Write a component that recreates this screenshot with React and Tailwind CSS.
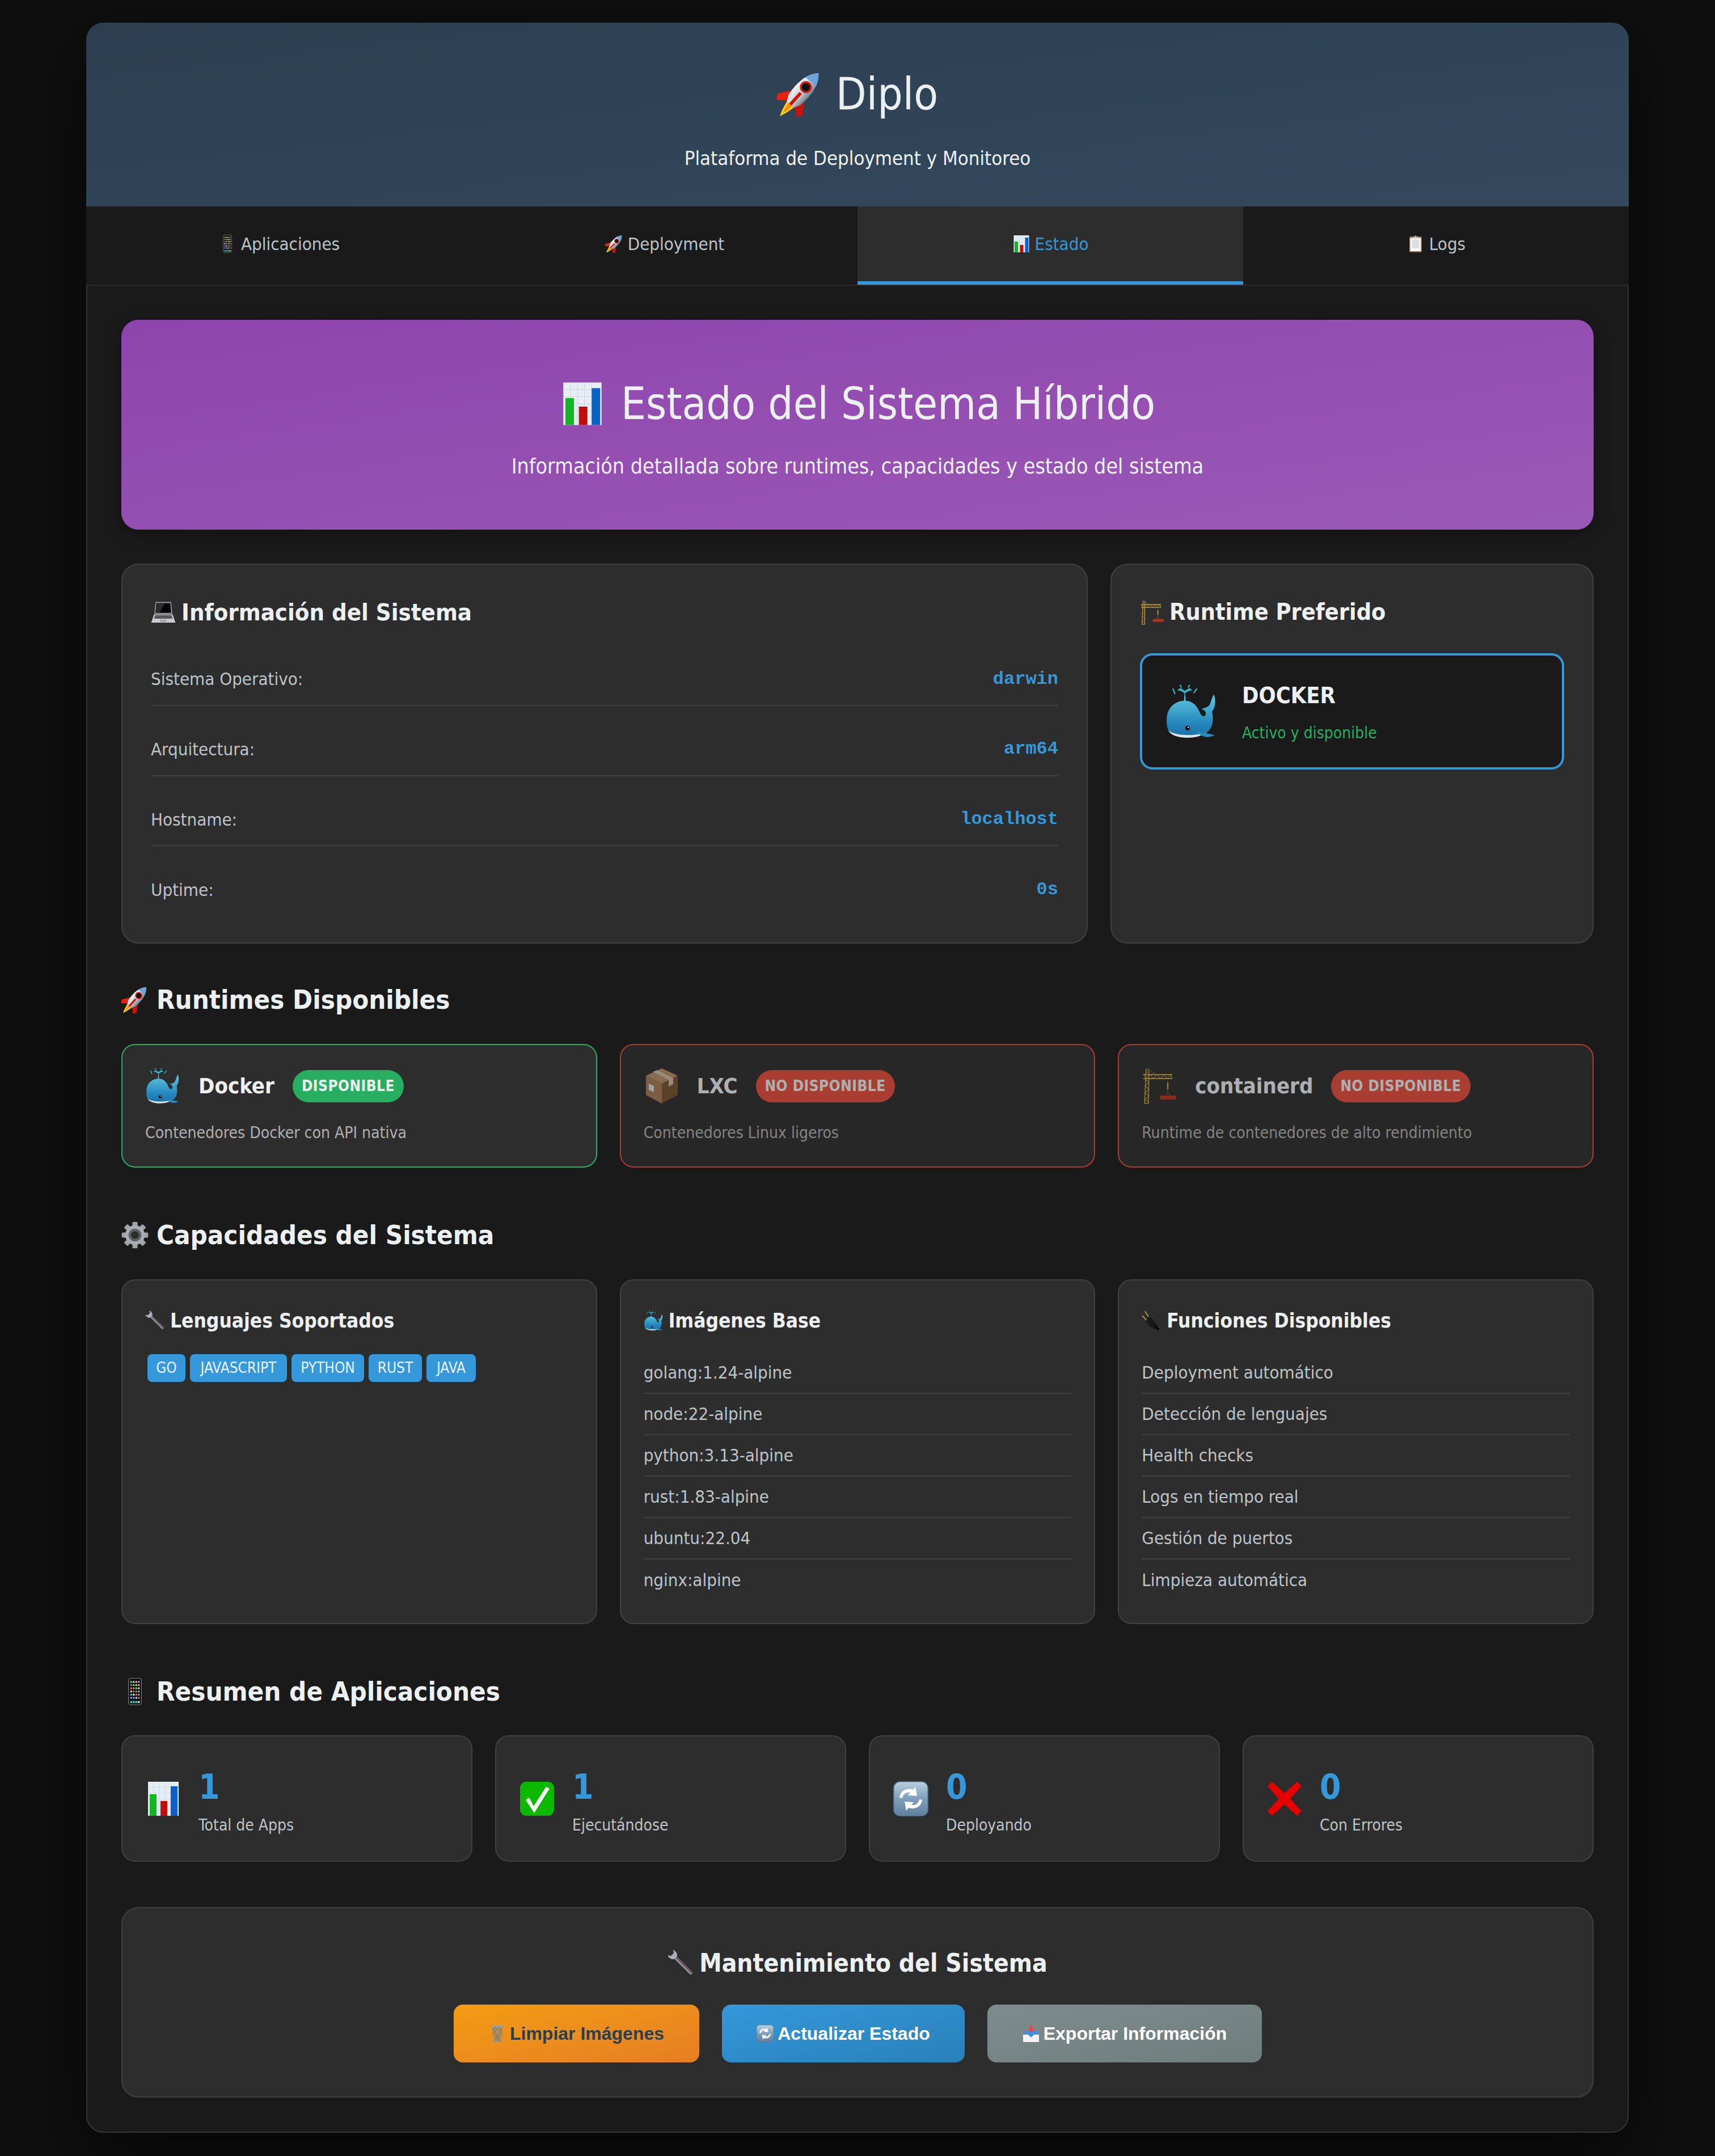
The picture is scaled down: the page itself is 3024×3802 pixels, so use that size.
import { useId } from "react";

const Svg = ({ size, className = "", viewBox = "0 0 64 64", children }) => (
  <svg viewBox={viewBox} width={size} height={size} className={`inline-block shrink-0 ${className}`}>
    {children}
  </svg>
);

const Rocket = ({ size, className }) => {
  const id = useId();
  return (
    <Svg size={size} className={className} viewBox="3 3 58 58">
      <defs>
        <linearGradient id={id} x1="0" x2="1" y1="0" y2="0">
          <stop offset="0" stopColor="#f4f4f4" />
          <stop offset="0.55" stopColor="#c9ced3" />
          <stop offset="1" stopColor="#6f7f8f" />
        </linearGradient>
      </defs>
      <g transform="rotate(42 32 32)">
        <path d="M22 34 L11 50 L14 58 L25 49 Z" fill="#e8200c" />
        <path d="M42 34 L53 50 L50 58 L39 49 Z" fill="#c8140a" />
        <path d="M26 50 H38 L35 62 L32 70 L29 62 Z" fill="#ffd21f" />
        <path d="M29 50 H35 L33.5 60 L32 64 L30.5 60 Z" fill="#ff8a10" />
        <path d="M32 -4 C42 6 45 22 42 42 L38 50 H26 L22 42 C19 22 22 6 32 -4 Z" fill={`url(#${id})`} />
        <path d="M32 -4 C36 0 39 5 41 11 H23 C25 5 28 0 32 -4 Z" fill="#6aa6dc" />
        <circle cx="32" cy="20" r="6.5" fill="#101216" stroke="#d3201a" strokeWidth="2.5" />
        <rect x="30" y="30" width="4" height="20" fill="#c8140a" />
      </g>
    </Svg>
  );
};

const Phone = ({ size, className }) => {
  const colors = ["#5ee08a", "#e9e9e9", "#f2a6d8", "#9a9a9a", "#4cc4f2", "#ffd94a", "#f06a5a", "#7fb0ff"];
  return (
    <Svg size={size} className={className}>
      <rect x="17" y="1" width="30" height="62" rx="5" fill="#0b0b0b" stroke="#8b8b8b" strokeWidth="1.5" />
      {[0, 1, 2, 3, 4, 5].map((r) =>
        [0, 1, 2, 3].map((c) => (
          <rect key={`${r}${c}`} x={21 + c * 6} y={7 + r * 7.5} width="4" height="4.5" rx="1" fill={colors[(r * 3 + c * 5) % 8]} />
        ))
      )}
      <rect x="20" y="53" width="24" height="7" rx="1.5" fill="#3a3a3a" />
      {[0, 1, 2, 3].map((c) => (
        <rect key={c} x={21 + c * 6} y="54.5" width="4" height="4" rx="1" fill={["#3ce0a0", "#4cc4f2", "#5ee08a", "#e9e9e9"][c]} />
      ))}
    </Svg>
  );
};

const Chart = ({ size, className }) => (
  <Svg size={size} className={className}>
    <rect x="5" y="2" width="54" height="60" fill="#e6edf3" />
    <path d="M5 12H59M5 22H59M5 32H59M5 42H59M5 52H59M15 2V62M25 2V62M35 2V62M45 2V62" stroke="#c5d3e0" strokeWidth="0.7" />
    <rect x="8" y="24" width="12" height="38" fill="#12b522" />
    <rect x="27" y="36" width="12" height="26" fill="#c00d0d" />
    <rect x="45" y="10" width="12" height="52" fill="#0a62c8" />
  </Svg>
);

const Clipboard = ({ size, className }) => (
  <Svg size={size} className={className}>
    <rect x="10" y="6" width="44" height="56" rx="3" fill="#8a6a45" />
    <rect x="13" y="11" width="38" height="47" fill="#f7f7f7" />
    <rect x="19" y="17" width="26" height="30" fill="#dedede" />
    <path d="M32 1 L35 6 H42 V12 H22 V6 H29 Z" fill="#b4b4b4" />
  </Svg>
);

const Laptop = ({ size, className }) => (
  <Svg size={size} className={className}>
    <path d="M12 5 H52 L55 36 H9 Z" fill="#9b9ea3" />
    <path d="M14 8 H50 L52 33 H12 Z" fill="#050505" />
    <path d="M14 8 H36 L22 33 H12 Z" fill="#2b2c30" />
    <path d="M8 37 H56 L63 58 H1 Z" fill="#c9cbce" />
    <path d="M11 39 H53 L56 48 H8 Z" fill="#55585c" />
    <path d="M24 50 H40 L41 56 H23 Z" fill="#a3a5a8" />
  </Svg>
);

const Crane = ({ size, className }) => (
  <Svg size={size} className={className}>
    <g stroke="#c9a33a" strokeWidth="1.6" fill="none">
      <path d="M8 2 L5 63 M13 2 L12 63 M5 63 H12" />
      <path d="M6 20 L13 26 L6 32 L13 38 L6 44 L13 50 L6 56 L13 62" strokeWidth="1.1" />
      <path d="M3 12 H54 M3 19 H54" strokeWidth="2" />
      <path d="M3 12 L9 19 L15 12 L21 19 L27 12 L33 19 L39 12 L45 19 L51 12 L54 19" strokeWidth="1.1" />
    </g>
    <path d="M10 1 V12 M10 2 L26 12" stroke="#66625a" strokeWidth="1.2" fill="none" />
    <path d="M46 19 V48" stroke="#57534c" strokeWidth="1.4" />
    <path d="M46 26 V38" stroke="#c9a33a" strokeWidth="2.4" />
    <path d="M41 50 L46 42 L51 50" stroke="#57534c" strokeWidth="1.2" fill="none" />
    <rect x="33" y="49" width="28" height="7" fill="#b5351f" />
  </Svg>
);

const Whale = ({ size, className }) => {
  const id = useId();
  return (
    <Svg size={size} className={className} viewBox="1 1 60 60">
      <defs>
        <linearGradient id={id} x1="0" x2="0" y1="0" y2="1">
          <stop offset="0" stopColor="#62c8de" />
          <stop offset="0.7" stopColor="#2386bd" />
          <stop offset="1" stopColor="#1f6fa8" />
        </linearGradient>
      </defs>
      <path d="M22 21 C22 14 23 9 23 9 C23 9 24 14 24 21 Z" fill="#41bdd6" />
      <path d="M15 8 C17 3 20 6 23 8 C26 6 29 3 31 8 C28 7 26 9 23 11 C20 9 18 7 15 8 Z" fill="#36b2d0" />
      <path d="M10 6 L12 11 M36 6 L33 10 M18 2 L19 4 M28 2 L27 4" stroke="#36b2d0" strokeWidth="1.4" strokeLinecap="round" />
      <path d="M3 40 C3 27 12 19 23 19 C33 19 37 26 40 33 C42 37 46 37 46 33 C46 30 44 29 41 28 C45 27 48 26 50 24 C52 20 53 15 55 12 C58 20 56 27 53 31 C55 40 54 50 46 55 C34 60 8 60 5 52 C3 48 3 44 3 40 Z" fill={`url(#${id})`} />
      <path d="M5 52 C12 58 36 58 46 54 C38 62 10 62 5 52 Z" fill="#d9e6ea" />
      <path d="M36 53 C42 54 50 55 56 57 C50 60 42 60 36 53 Z" fill="#2b8cc0" />
      <circle cx="26" cy="49" r="2.6" fill="#0b0b0b" />
      <circle cx="26.8" cy="48.2" r="0.8" fill="#ffffff" />
    </Svg>
  );
};

const Box = ({ size, className }) => (
  <Svg size={size} className={className}>
    <path d="M32 1 L60 14 L32 28 L4 14 Z" fill="#b98f68" />
    <path d="M4 14 L32 28 L32 63 L4 48 Z" fill="#a87b54" />
    <path d="M60 14 L32 28 L32 63 L60 48 Z" fill="#76532f" />
    <path d="M16 7 L44 21 L44 33 L52 29 L52 18 L24 4 Z" fill="#cdbba5" />
    <path d="M9 28 L18 32 V43 L9 39 Z" fill="#dcdcdc" />
  </Svg>
);

const Gear = ({ size, className }) => (
  <Svg size={size} className={className}>
    {[0, 45, 90, 135, 180, 225, 270, 315].map((a) => (
      <rect key={a} x="26" y="1" width="12" height="14" rx="2" fill="#9fa3a8" transform={`rotate(${a} 32 32)`} />
    ))}
    <circle cx="32" cy="32" r="23" fill="#a9adb2" />
    <circle cx="32" cy="32" r="15" fill="#5b5f64" />
    <circle cx="32" cy="32" r="9" fill="#2d2d2d" />
  </Svg>
);

const Wrench = ({ size, className }) => (
  <Svg size={size} className={className}>
    <g transform="rotate(-45 32 32)">
      <rect x="28" y="12" width="8" height="56" rx="4" fill="#8d8f97" />
      <rect x="32" y="12" width="4" height="56" rx="2" fill="#6c5a60" />
      <path d="M23 -4 C20 3 22 11 28 14 H36 C42 11 44 3 41 -4 L37 3 H27 Z" fill="#a9b0ba" />
    </g>
  </Svg>
);

const Plug = ({ size, className }) => (
  <Svg size={size} className={className}>
    <path d="M10 2 L26 26 M2 16 L18 34" stroke="#c8a83c" strokeWidth="3" />
    <path d="M24 16 L44 36 L50 52 L40 60 L26 50 L12 34 Z" fill="#191919" stroke="#3a3a3a" strokeWidth="1" />
    <path d="M44 42 L56 58 L50 62 L38 50 Z" fill="#0c0c0c" />
  </Svg>
);

const Check = ({ size, className }) => (
  <Svg size={size} className={className}>
    <rect x="2" y="2" width="60" height="60" rx="11" fill="#0db800" />
    <path d="M12 34 L18 30 L26 45 L48 11 L54 14 L27 57 Z" fill="#ffffff" />
  </Svg>
);

const Refresh = ({ size, className }) => {
  const id = useId();
  return (
    <Svg size={size} className={className}>
      <defs>
        <linearGradient id={id} x1="0" x2="0" y1="0" y2="1">
          <stop offset="0" stopColor="#b9cfe0" />
          <stop offset="0.5" stopColor="#7f9fbc" />
          <stop offset="1" stopColor="#5f7f9c" />
        </linearGradient>
      </defs>
      <rect x="2" y="2" width="60" height="60" rx="11" fill={`url(#${id})`} stroke="#5b7a96" strokeWidth="1.5" />
      <path d="M12 30 C13 19 24 12 36 16 L40 11 L43 27 L27 26 L31 21 C24 20 18 24 17 31 Z" fill="#ffffff" />
      <path d="M52 34 C51 45 40 52 28 48 L24 53 L21 37 L37 38 L33 43 C40 44 46 40 47 33 Z" fill="#ffffff" />
    </Svg>
  );
};

const Cross = ({ size, className }) => (
  <Svg size={size} className={className}>
    <path d="M2 10 L10 2 L32 22 L54 2 L62 10 L42 32 L62 54 L54 62 L32 42 L10 62 L2 54 L22 32 L2 10 Z" fill="#e70000" />
  </Svg>
);

const Trash = ({ size, className }) => (
  <Svg size={size} className={className}>
    <path d="M13 8 H51 L46 62 H18 Z" fill="#8a8f8c" opacity="0.55" />
    <path d="M15 12 L46 62 M25 10 L52 42 M37 10 L49 28 M49 12 L18 62 M39 10 L14 36 M27 10 L14 22 M22 34 L38 62 M42 34 L28 62" stroke="#5f6668" strokeWidth="1.4" />
    <path d="M12 3 H52 V10 H12 Z" fill="#9aa0a0" />
    <path d="M17 58 H47 V62 H17 Z" fill="#8f9595" />
  </Svg>
);

const Inbox = ({ size, className }) => (
  <Svg size={size} className={className}>
    <path d="M10 22 H54 L60 60 H4 Z" fill="#3f8ee8" />
    <path d="M4 36 H22 L32 46 L42 36 H60 V62 H4 Z" fill="#f4f4f4" />
    <rect x="28" y="2" width="8" height="18" fill="#ef4444" />
    <path d="M21 16 H43 L32 30 Z" fill="#ef4444" />
  </Svg>
);

const tabs = [
  { icon: Phone, label: "Aplicaciones" },
  { icon: Rocket, label: "Deployment" },
  { icon: Chart, label: "Estado", active: true },
  { icon: Clipboard, label: "Logs" },
];

const sysInfo = [
  ["Sistema Operativo:", "darwin"],
  ["Arquitectura:", "arm64"],
  ["Hostname:", "localhost"],
  ["Uptime:", "0s"],
];

const runtimes = [
  { icon: Whale, name: "Docker", desc: "Contenedores Docker con API nativa", ok: true },
  { icon: Box, name: "LXC", desc: "Contenedores Linux ligeros" },
  { icon: Crane, name: "containerd", desc: "Runtime de contenedores de alto rendimiento" },
];

const languages = [
  { name: "GO", width: "w-[67px]" },
  { name: "JAVASCRIPT", width: "w-[171px]" },
  { name: "PYTHON", width: "w-[128px]" },
  { name: "RUST", width: "w-[94px]" },
  { name: "JAVA", width: "w-[87px]" },
];
const baseImages = ["golang:1.24-alpine", "node:22-alpine", "python:3.13-alpine", "rust:1.83-alpine", "ubuntu:22.04", "nginx:alpine"];
const features = ["Deployment automático", "Detección de lenguajes", "Health checks", "Logs en tiempo real", "Gestión de puertos", "Limpieza automática"];

const stats = [
  { icon: Chart, value: "1", label: "Total de Apps" },
  { icon: Check, value: "1", label: "Ejecutándose" },
  { icon: Refresh, value: "0", label: "Deployando" },
  { icon: Cross, value: "0", label: "Con Errores" },
];

const SectionTitle = ({ icon: Icon, children }) => (
  <h2 className="flex items-center gap-[14px] h-[78px] text-[47px] font-bold text-[#ecf0f1]">
    <Icon size={48} />
    {children}
  </h2>
);

const CardTitle = ({ icon: Icon, children }) => (
  <h3 className="flex items-center gap-[8px] h-[62px] text-[35px] font-bold text-[#ecf0f1]">
    <Icon size={36} />
    {children}
  </h3>
);

const ListCard = ({ icon, title, items }) => (
  <div className="h-[608px] bg-[#2d2d2d] border-2 border-[#404040] rounded-[24px] p-[40px]">
    <CardTitle icon={icon}>{title}</CardTitle>
    <ul className="mt-[25px]">
      {items.map((item) => (
        <li key={item} className="h-[73px] flex items-center text-[31px] text-[#bdc3c7] border-b-2 border-[#404040] last:border-b-0">
          {item}
        </li>
      ))}
    </ul>
  </div>
);

const App = () => {
  return (
    <div className="min-h-screen bg-[#0f0f0f] py-[40px] font-['DejaVu_Sans_Condensed','DejaVu_Sans',sans-serif] text-[32px] text-[#ecf0f1]">
      <div className="mx-auto w-[2720px] rounded-[30px] shadow-[0_40px_120px_rgba(0,0,0,0.6)]">
        <header className="h-[324px] rounded-t-[30px] bg-gradient-to-br from-[#2c3e50] to-[#34495e] flex flex-col items-center">
          <h1 className="mt-[62px] h-[128px] flex items-center gap-[24px] text-[78px] font-normal">
            <Rocket size={80} />
            Diplo
          </h1>
          <p className="mt-[24px] text-[34.5px] leading-[50px] text-[#ecf0f1]">Plataforma de Deployment y Monitoreo</p>
        </header>

        <nav className="flex bg-[#1a1a1a] h-[140px] border-b-2 border-[#2e2e2e]">
          {tabs.map(({ icon: Icon, label, active }) => (
            <div
              key={label}
              className={`flex-1 flex items-center justify-center gap-[8px] text-[31px] border-b-[6px] ${
                active ? "bg-[#2d2d2d] text-[#3498db] border-[#3498db]" : "text-[#bdc3c7] border-transparent"
              }`}
            >
              <Icon size={32} />
              {label}
            </div>
          ))}
        </nav>

        <main className="bg-[#1a1a1a] border-2 border-t-0 border-[#333333] rounded-b-[30px] p-[60px]">
          <section className="h-[370px] rounded-[30px] bg-gradient-to-br from-[#8e44ad] to-[#9b59b6] shadow-[0_8px_30px_rgba(0,0,0,0.3)] flex flex-col items-center pt-[80px]">
            <h2 className="flex items-center gap-[28px] h-[136px] text-[77.5px] font-normal text-[#ecf0f1]">
              <Chart size={80} />
              Estado del Sistema Híbrido
            </h2>
            <p className="mt-[12px] text-[37.3px] leading-[60px] text-[#ecf0f1]">
              Información detallada sobre runtimes, capacidades y estado del sistema
            </p>
          </section>

          <section className="mt-[60px] grid grid-cols-[1704px_1fr] gap-[40px] h-[670px]">
            <div className="bg-[#2d2d2d] border-2 border-[#404040] rounded-[30px] px-[50px] pt-[50px]">
              <h3 className="flex items-center gap-[10px] h-[68px] text-[41.5px] font-bold">
                <Laptop size={44} />
                Información del Sistema
              </h3>
              <div className="mt-[58px]">
                {sysInfo.map(([k, v]) => (
                  <div
                    key={k}
                    className="h-[73px] pb-[20px] mb-[50.67px] last:mb-0 flex items-center justify-between text-[31px] border-b-2 border-[#404040] last:border-b-0"
                  >
                    <span className="text-[#bdc3c7]">{k}</span>
                    <span className="font-['Liberation_Mono',monospace] text-[32px] font-bold text-[#3498db]">{v}</span>
                  </div>
                ))}
              </div>
            </div>

            <div className="bg-[#2d2d2d] border-2 border-[#404040] rounded-[30px] px-[50px] pt-[50px]">
              <h3 className="flex items-center gap-[8px] h-[68px] text-[41px] font-bold">
                <Crane size={44} />
                Runtime Preferido
              </h3>
              <div className="mt-[38px] h-[205px] border-4 border-[#3498db] rounded-[22px] bg-[#1a1a1a] flex items-center px-[40px] gap-[40px]">
                <Whale size={96} />
                <div>
                  <div className="text-[39.5px] leading-[62px] font-bold">DOCKER</div>
                  <div className="mt-[14px] text-[28px] leading-[44px] text-[#27ae60]">Activo y disponible</div>
                </div>
              </div>
            </div>
          </section>

          <div className="mt-[60px]">
            <SectionTitle icon={Rocket}>Runtimes Disponibles</SectionTitle>
          </div>
          <section className="mt-[39px] grid grid-cols-3 gap-[40px]">
            {runtimes.map(({ icon: Icon, name, desc, ok }) => (
              <div
                key={name}
                className={`h-[218px] bg-[#2d2d2d] border-2 rounded-[24px] px-[40px] pt-[40px] ${
                  ok ? "border-[#27ae60]" : "border-[#e74c3c] opacity-70"
                }`}
              >
                <div className="flex items-center h-[64px]">
                  <Icon size={64} />
                  <span className="ml-[30px] text-[38px] font-bold">{name}</span>
                  <span
                    className={`ml-[32px] h-[57px] flex items-center px-[16px] rounded-[30px] text-[26px] font-bold uppercase tracking-[0.5px] ${
                      ok ? "bg-[#27ae60]" : "bg-[#e74c3c]"
                    }`}
                  >
                    {ok ? "Disponible" : "No disponible"}
                  </span>
                </div>
                <p className="mt-[29px] text-[28.1px] leading-[44px] text-[#b0b0b0]">{desc}</p>
              </div>
            ))}
          </section>

          <div className="mt-[80px]">
            <SectionTitle icon={Gear}>Capacidades del Sistema</SectionTitle>
          </div>
          <section className="mt-[39px] grid grid-cols-3 gap-[40px]">
            <div className="h-[608px] bg-[#2d2d2d] border-2 border-[#404040] rounded-[24px] p-[40px]">
              <CardTitle icon={Wrench}>Lenguajes Soportados</CardTitle>
              <div className="mt-[28px] flex flex-wrap gap-[8px] px-[4px]">
                {languages.map(({ name, width }) => (
                  <span key={name} className={`${width} h-[49px] flex items-center justify-center bg-[#3498db] rounded-[8px] text-[26px]`}>
                    {name}
                  </span>
                ))}
              </div>
            </div>
            <ListCard icon={Whale} title="Imágenes Base" items={baseImages} />
            <ListCard icon={Plug} title="Funciones Disponibles" items={features} />
          </section>

          <div className="mt-[80px]">
            <SectionTitle icon={Phone}>Resumen de Aplicaciones</SectionTitle>
          </div>
          <section className="mt-[38px] grid grid-cols-4 gap-[40px]">
            {stats.map(({ icon: Icon, value, label }) => (
              <div key={label} className="h-[223px] bg-[#2d2d2d] border-2 border-[#404040] rounded-[24px] px-[40px] flex items-center gap-[30px]">
                <Icon size={64} />
                <div className="mt-[10px]">
                  <div className="text-[60px] leading-[76px] font-bold text-[#3498db]">{value}</div>
                  <div className="mt-[8px] text-[28px] leading-[44px] text-[#bdc3c7]">{label}</div>
                </div>
              </div>
            ))}
          </section>

          <section className="mt-[80px] h-[336px] bg-[#2d2d2d] border-2 border-[#404040] rounded-[30px] flex flex-col items-center pt-[58px]">
            <h3 className="flex items-center gap-[8px] h-[78px] text-[44px] font-bold">
              <Wrench size={48} />
              Mantenimiento del Sistema
            </h3>
            <div className="mt-[34px] flex gap-[40px] font-['Liberation_Sans',sans-serif] font-bold text-[32px]">
              <button className="h-[102px] w-[433px] flex items-center justify-center gap-[6px] rounded-[16px] bg-gradient-to-br from-[#f39c12] to-[#e67e22] text-[#2c3e50]">
                <Trash size={32} />
                Limpiar Imágenes
              </button>
              <button className="h-[102px] w-[428px] flex items-center justify-center gap-[6px] rounded-[16px] bg-gradient-to-br from-[#3498db] to-[#2980b9] text-white">
                <Refresh size={32} />
                Actualizar Estado
              </button>
              <button className="h-[102px] w-[484px] flex items-center justify-center gap-[6px] rounded-[16px] bg-gradient-to-br from-[#7f8c8d] to-[#6f7d7d] text-white">
                <Inbox size={32} />
                Exportar Información
              </button>
            </div>
          </section>
        </main>
      </div>
    </div>
  );
};

export default App;
